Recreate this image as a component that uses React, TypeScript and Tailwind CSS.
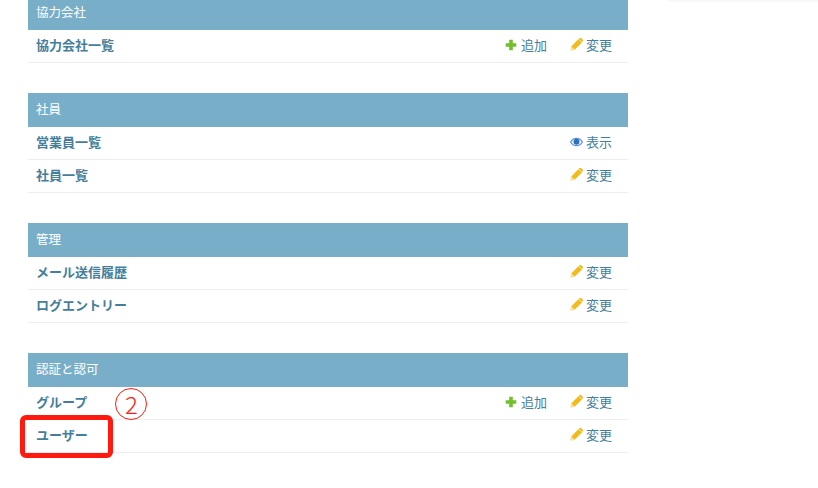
import React from "react";

const Plus = () => (
  <svg width="12" height="12" viewBox="0 0 12 12" className="shrink-0">
    <path d="M4.2.7h3.6v3.5h3.5v3.6H7.8v3.5H4.2V7.8H.7V4.2h3.5z" fill="#70bf2b" />
  </svg>
);
const Pencil = () => (
  <svg width="13" height="13" viewBox="0 0 13 13" className="shrink-0">
    <path d="M8.6 1 12 4.4 4.6 11.8 1.2 8.4z" fill="#f2bb1c" />
    <path d="M9 .6 9.8.1a1 1 0 0 1 1.2 0l1.8 1.8a1 1 0 0 1 0 1.2l-.5.9z" fill="#f0ae12" />
    <path d="M1 8.6 4.4 12 .4 12.8z" fill="#f8dc8f" />
  </svg>
);
const Eye = () => (
  <svg width="13" height="12" viewBox="0 0 14 12" className="shrink-0">
    <path d="M.6 6C2.2 3.2 4.4 2 7 2S11.8 3.2 13.4 6C11.8 8.8 9.6 10 7 10S2.2 8.8.6 6z" fill="none" stroke="#5b94d6" strokeWidth="1.3" />
    <circle cx="7" cy="5.8" r="3.2" fill="#2f6fc0" />
  </svg>
);

type Row = { name: string; add?: boolean; action: "change" | "view" };
const sections: { title: string; rows: Row[] }[] = [
  { title: "協力会社", rows: [{ name: "協力会社一覧", add: true, action: "change" }] },
  { title: "社員", rows: [{ name: "営業員一覧", action: "view" }, { name: "社員一覧", action: "change" }] },
  { title: "管理", rows: [{ name: "メール送信履歴", action: "change" }, { name: "ログエントリー", action: "change" }] },
  { title: "認証と認可", rows: [{ name: "グループ", add: true, action: "change" }, { name: "ユーザー", action: "change" }] },
];

export default function App() {
  return (
    <div
      className="relative w-[818px] h-[488px] overflow-hidden bg-white text-[13px]"
      style={{ fontFamily: '"Noto Sans CJK JP", "Noto Sans", sans-serif' }}
    >
      <div className="flex items-start">
        <div className="ml-[28px] w-[600px] -mt-[4px] flex flex-col gap-[30px]">
          {sections.map((s) => (
            <section key={s.title}>
              <h2 className="h-[34px] pb-[1px] flex items-center bg-[#79aec8] px-[8px] text-[12.5px] font-normal text-white">
                {s.title}
              </h2>
              {s.rows.map((r) => (
                <div
                  key={r.name}
                  className="h-[33px] pb-[3px] flex items-center border-b border-[#eeeeee] pl-[8px] pr-[16px] text-[#447e9b]"
                >
                  <span className="flex-1 font-bold">{r.name}</span>
                  {r.add && (
                    <span className="flex items-center gap-[3px] mr-[23px]">
                      <Plus />
                      <span className="ml-[1px]">追加</span>
                    </span>
                  )}
                  <span className="flex items-center gap-[3px]">
                    {r.action === "change" ? <Pencil /> : <Eye />}
                    {r.action === "change" ? "変更" : "表示"}
                  </span>
                </div>
              ))}
            </section>
          ))}
        </div>
        <div className="ml-[40px] w-[150px] h-[2px] bg-[#f8f8f8]" />
      </div>
      <div className="absolute left-[20px] top-[415px] w-[93px] h-[43px] rounded-[6px] border-[5px] border-[#ff1a0f]" />
      <div className="absolute left-[115px] top-[388px] w-[32px] h-[32px] pl-[1px] rounded-full border-[1.5px] border-[#ff1a0f] flex items-center justify-center text-[24px] font-light leading-none text-[#ff1a0f]">
        2
      </div>
    </div>
  );
}
